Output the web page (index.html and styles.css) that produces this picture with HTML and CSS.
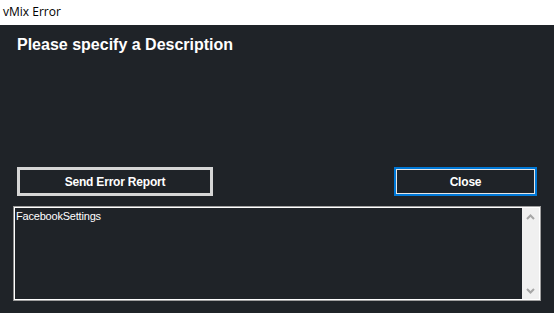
FILE: index.html
```html
<!DOCTYPE html>
<html lang="en">
<head>
    <meta charset="UTF-8">
    <title>vMix Error</title>
    <link rel="stylesheet" href="styles.css">
</head>
<body>
    <div class="titlebar">vMix Error</div>

    <div class="window">
        <h1 class="heading">Please specify a Description</h1>

        <div class="buttons">
            <button class="btn btn-send">Send Error Report</button>
            <button class="btn btn-close">Close</button>
        </div>

        <div class="log">
            <div class="log-text">FacebookSettings</div>
            <div class="scrollbar">
                <svg width="9" height="6" viewBox="0 0 9 6"><path d="M1 5 L4.5 1.5 L8 5" fill="none" stroke="#a6a6a6" stroke-width="2"/></svg>
                <svg width="9" height="6" viewBox="0 0 9 6"><path d="M1 1 L4.5 4.5 L8 1" fill="none" stroke="#a6a6a6" stroke-width="2"/></svg>
            </div>
        </div>
    </div>
</body>
</html>
```

FILE: styles.css
```css
body {
    margin: 0;
    padding: 0;
    width: 554px;
    height: 313px;
    overflow: hidden;
    background-color: #1f2328;
    font-family: 'Liberation Sans', Arial, sans-serif;
    display: flex;
    flex-direction: column;
}
.titlebar {
    height: 25px;
    background-color: white;
    color: black;
    font-family: 'Open Sans', 'Noto Sans', sans-serif;
    font-size: 12px;
    line-height: 24px;
    padding-left: 3px;
    box-sizing: border-box;
}
.window {
    flex: 1;
    display: flex;
    flex-direction: column;
    padding: 0 13px 12px 13px;
}
.heading {
    margin: 10px 0 0 4px;
    font-size: 16px;
    font-weight: bold;
    color: white;
    line-height: 19px;
}
.buttons {
    display: flex;
    justify-content: space-between;
    margin: 113px 4px 0 4px;
}
.btn {
    height: 29px;
    background-color: #1f2328;
    color: white;
    font-family: 'Liberation Sans', Arial, sans-serif;
    font-size: 12px;
    font-weight: bold;
    letter-spacing: -0.2px;
    box-sizing: border-box;
    padding: 0;
}
.btn-send {
    width: 196px;
    border: 3px solid #d6d6d6;
}
.btn-close {
    width: 143px;
    border: 2px solid #0078d7;
    box-shadow: inset 0 0 0 1px #e6e6e6;
}
.log {
    margin-top: 10px;
    height: 95px;
    display: flex;
    border: 1px solid #a0a0a0;
    border-left-color: #8a8a8a;
    box-shadow: inset 0 0 0 1px white;
    box-sizing: border-box;
    padding: 1px;
}
.log-text {
    flex: 1;
    color: white;
    font-size: 11px;
    letter-spacing: -0.2px;
    padding: 2px 0 0 1px;
}
.scrollbar {
    width: 17px;
    background-color: #f0f0f0;
    display: flex;
    flex-direction: column;
    justify-content: space-between;
    align-items: center;
    padding: 6px 0 5px 0;
}
```
